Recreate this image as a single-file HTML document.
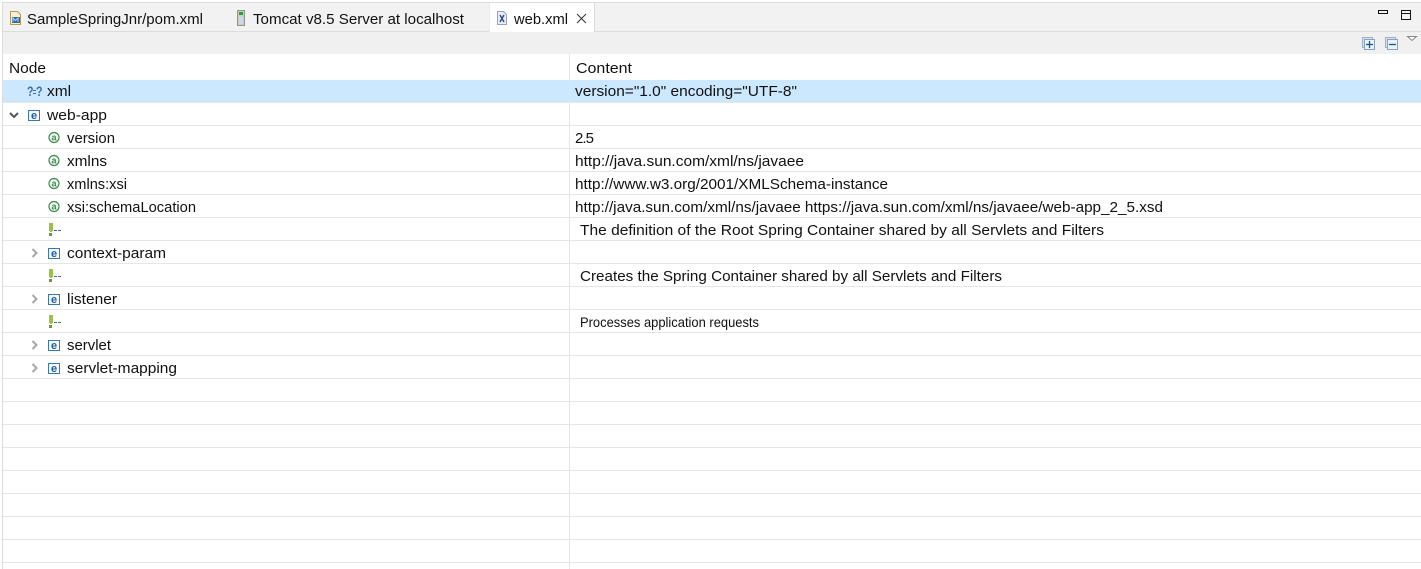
<!DOCTYPE html>
<html><head><meta charset="utf-8"><style>
html,body{margin:0;padding:0;background:#fff;width:1421px;height:569px;overflow:hidden}
svg{display:block}
text{font-family:"Liberation Sans",sans-serif;font-size:15px;fill:#111}
.e{font-size:11px;font-weight:bold;fill:#1f5f9f}
.a{font-size:9px;font-weight:bold;fill:#3f8a4f}
.q{font-size:14px;font-weight:bold;fill:#3a6ea5}
</style></head><body>
<svg width="1421" height="569" viewBox="0 0 1421 569" xmlns="http://www.w3.org/2000/svg" shape-rendering="crispEdges">
<defs>
<g id="el"><rect x="0.5" y="0.5" width="11" height="10" fill="#f4f8fc" stroke="#3c78b0"/><text x="3" y="9" class="e">e</text></g>
<g id="at"><circle cx="6" cy="6" r="5" fill="#f2f8f2" stroke="#3f8a4f" stroke-width="1.2" shape-rendering="auto"/><text x="3.5" y="9" class="a">a</text></g>
<g id="cm"><path d="M-1 0h4v8h-1v1h-2v-1h-1z" fill="#9cc04a"/><rect x="-1" y="10" width="3" height="3" fill="#6c9a2c"/><rect x="4" y="7" width="3" height="1" fill="#3a6ea5"/><rect x="8" y="7" width="3" height="1" fill="#3a6ea5"/></g>
<path id="ar" d="M0.5 0l4 4-4 4" fill="none" stroke="#a8a8a8" stroke-width="2" shape-rendering="auto"/>
</defs>

<rect x="3" y="3" width="1418" height="28" fill="#f2f2f2"/>
<rect x="3" y="32" width="1418" height="22" fill="#f0f0f0"/>
<rect x="2" y="2" width="1419" height="1" fill="#dcdcdc"/>
<rect x="3" y="31" width="1418" height="1" fill="#dcdcdc"/>
<rect x="2" y="2" width="1" height="567" fill="#dcdcdc"/>
<rect x="490" y="3" width="104" height="29" fill="#fff"/>
<rect x="489" y="3" width="1" height="29" fill="#ececec"/>
<rect x="594" y="3" width="1" height="29" fill="#dcdcdc"/>

<rect x="3" y="80" width="1418" height="22" fill="#cce8ff"/>
<g fill="#e6e6e6">
<rect x="3" y="102" width="1418" height="1"/><rect x="3" y="125" width="1418" height="1"/><rect x="3" y="148" width="1418" height="1"/><rect x="3" y="171" width="1418" height="1"/><rect x="3" y="194" width="1418" height="1"/><rect x="3" y="217" width="1418" height="1"/><rect x="3" y="240" width="1418" height="1"/><rect x="3" y="263" width="1418" height="1"/><rect x="3" y="286" width="1418" height="1"/><rect x="3" y="309" width="1418" height="1"/><rect x="3" y="332" width="1418" height="1"/><rect x="3" y="355" width="1418" height="1"/><rect x="3" y="378" width="1418" height="1"/><rect x="3" y="401" width="1418" height="1"/><rect x="3" y="424" width="1418" height="1"/><rect x="3" y="447" width="1418" height="1"/><rect x="3" y="470" width="1418" height="1"/><rect x="3" y="493" width="1418" height="1"/><rect x="3" y="516" width="1418" height="1"/><rect x="3" y="539" width="1418" height="1"/><rect x="3" y="562" width="1418" height="1"/>
<rect x="569" y="54" width="1" height="515"/>
</g>

<!-- tab icons -->
<path d="M10.500 11.500h7l3 3v10h-10z" fill="#f6efd8" stroke="#b59a55"/>
<rect x="12" y="17" width="8" height="6" fill="#2a6aa8"/>
<path d="M13 22v-4l2.500 2.500 2.500-2.500v4" fill="none" stroke="#dfe9f3" stroke-width="0.800" shape-rendering="auto"/>
<rect x="237.500" y="10.500" width="7" height="15" fill="#c8d0b8" stroke="#8c9a80"/>
<rect x="239" y="12" width="4" height="3" fill="#2f9a4a"/>
<rect x="239" y="17" width="4" height="7" fill="#cfd6f2"/>
<path d="M497.500 11.500h6l3 3v10h-9z" fill="#e8ebf5" stroke="#9aa2b8"/>
<path d="M500 15l4 7M504 15l-4 7" stroke="#2f4f7f" stroke-width="1.400" fill="none" shape-rendering="auto"/>
<path d="M577 14l9 9M586 14l-9 9" stroke="#333" stroke-width="1" fill="none" shape-rendering="auto"/>

<!-- window controls -->
<rect x="1378.500" y="10.500" width="9" height="3" fill="none" stroke="#111"/>
<rect x="1401.500" y="10.500" width="9" height="9" fill="none" stroke="#111"/>
<rect x="1401" y="13" width="10" height="1" fill="#111"/>
<!-- toolbar -->
<rect x="1362.500" y="37.500" width="10" height="10" fill="#d5e3ee" stroke="#9fb0c6"/>
<rect x="1364.500" y="39.500" width="10" height="10" fill="#e8f2f8" stroke="#8aa0bc"/>
<path d="M1366 44.500h7M1369.500 41v7" stroke="#0f5c8c" stroke-width="1.300" fill="none" shape-rendering="auto"/>
<rect x="1385.500" y="37.500" width="10" height="10" fill="#d5e3ee" stroke="#9fb0c6"/>
<rect x="1387.500" y="39.500" width="10" height="10" fill="#e8f2f8" stroke="#8aa0bc"/>
<path d="M1389 44.500h7" stroke="#0f5c8c" stroke-width="1.300" fill="none" shape-rendering="auto"/>
<path d="M1407.500 36.500h9l-4.500 4z" fill="#fff" stroke="#888" shape-rendering="auto"/>

<!-- tree icons -->
<text x="27" y="96" class="q" textLength="6.500" lengthAdjust="spacingAndGlyphs">?</text>
<rect x="33" y="90" width="3" height="1" fill="#3a6ea5"/><rect x="33" y="93" width="3" height="1" fill="#3a6ea5"/>
<text x="36" y="96" class="q" textLength="6.500" lengthAdjust="spacingAndGlyphs">?</text>
<path d="M10 113l4 4 4-4" fill="none" stroke="#555" stroke-width="2" shape-rendering="auto"/>
<use href="#el" x="28" y="110"/>
<use href="#at" x="48" y="131.500"/>
<use href="#at" x="48" y="154.500"/>
<use href="#at" x="48" y="177.500"/>
<use href="#at" x="48" y="200.500"/>
<use href="#cm" x="50" y="223"/>
<use href="#ar" x="32" y="249"/>
<use href="#el" x="48" y="248"/>
<use href="#cm" x="50" y="269"/>
<use href="#ar" x="32" y="295"/>
<use href="#el" x="48" y="294"/>
<use href="#cm" x="50" y="315"/>
<use href="#ar" x="32" y="341"/>
<use href="#el" x="48" y="340"/>
<use href="#ar" x="32" y="364"/>
<use href="#el" x="48" y="363"/>

<!-- text -->
<text lengthAdjust="spacingAndGlyphs" x="27" y="24" textLength="176">SampleSpringJnr/pom.xml</text>
<text lengthAdjust="spacingAndGlyphs" x="253" y="24" textLength="211">Tomcat v8.5 Server at localhost</text>
<text lengthAdjust="spacingAndGlyphs" x="514" y="24" textLength="54">web.xml</text>
<text lengthAdjust="spacingAndGlyphs" x="9" y="73" textLength="37">Node</text>
<text lengthAdjust="spacingAndGlyphs" x="576" y="73" textLength="56">Content</text>
<text lengthAdjust="spacingAndGlyphs" x="47" y="96" textLength="24">xml</text>
<text lengthAdjust="spacingAndGlyphs" x="575" y="96" textLength="222">version="1.0" encoding="UTF-8"</text>
<text lengthAdjust="spacingAndGlyphs" x="47" y="120" textLength="60">web-app</text>
<text lengthAdjust="spacingAndGlyphs" x="67" y="143" textLength="48">version</text>
<text x="575" y="143" textLength="19">2.5</text>
<text lengthAdjust="spacingAndGlyphs" x="67" y="166" textLength="40">xmlns</text>
<text lengthAdjust="spacingAndGlyphs" x="575" y="166" textLength="229">http://java.sun.com/xml/ns/javaee</text>
<text lengthAdjust="spacingAndGlyphs" x="67" y="189" textLength="60">xmlns:xsi</text>
<text lengthAdjust="spacingAndGlyphs" x="575" y="189" textLength="313">http://www.w3.org/2001/XMLSchema-instance</text>
<text lengthAdjust="spacingAndGlyphs" x="67" y="212" textLength="129">xsi:schemaLocation</text>
<text lengthAdjust="spacingAndGlyphs" x="575" y="212" textLength="588">http://java.sun.com/xml/ns/javaee https://java.sun.com/xml/ns/javaee/web-app_2_5.xsd</text>
<text lengthAdjust="spacingAndGlyphs" x="580" y="235" textLength="524">The definition of the Root Spring Container shared by all Servlets and Filters</text>
<text lengthAdjust="spacingAndGlyphs" x="67" y="258" textLength="99">context-param</text>
<text lengthAdjust="spacingAndGlyphs" x="580" y="281" textLength="422">Creates the Spring Container shared by all Servlets and Filters</text>
<text lengthAdjust="spacingAndGlyphs" x="67" y="304" textLength="50">listener</text>
<text style="font-size:14px" lengthAdjust="spacingAndGlyphs" x="580" y="327" textLength="179">Processes application requests</text>
<text lengthAdjust="spacingAndGlyphs" x="67" y="350" textLength="44">servlet</text>
<text lengthAdjust="spacingAndGlyphs" x="67" y="373" textLength="110">servlet-mapping</text>
</svg>
</body></html>
